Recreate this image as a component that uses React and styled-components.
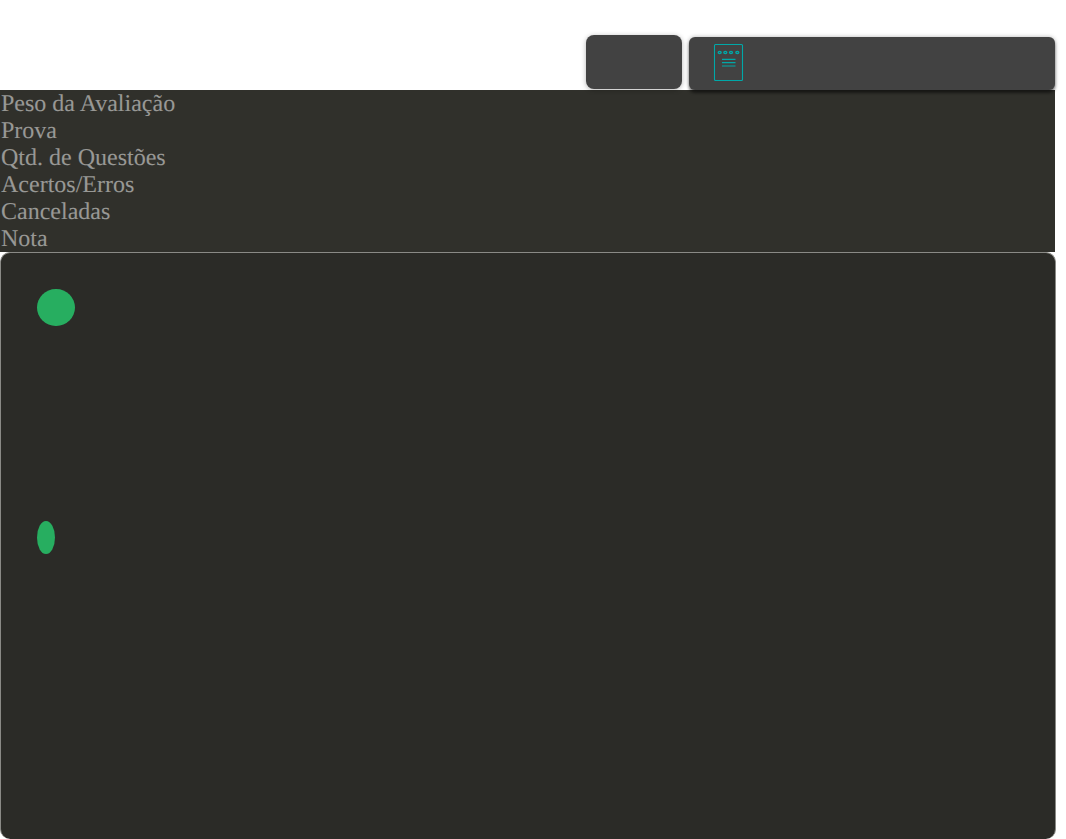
import React from "react";
import styled, { createGlobalStyle } from "styled-components";

const GlobalStyle = createGlobalStyle`
  html, body {
    margin: 0;
    padding: 0;
    background: #ffffff;
  }
  * {
    box-sizing: border-box;
  }
`;

const DocIcon = () => (
  <svg width="31" height="39" viewBox="0 0 31 39" fill="none" stroke="#00a8a8">
    <rect x="1.5" y="1.5" width="28" height="36" rx="1" strokeWidth="1.1" />
    <g strokeWidth="1.300">
      <ellipse cx="6.700" cy="9.500" rx="1.500" ry="1.100" />
      <ellipse cx="12.300" cy="9.500" rx="1.500" ry="1.100" />
      <ellipse cx="18" cy="9.500" rx="1.500" ry="1.100" />
      <ellipse cx="24.300" cy="9.500" rx="1.500" ry="1.100" />
    </g>
    <g strokeWidth="1.200">
      <path d="M9 16.300h13.500M9 19.700h13.500M9 23h13.500" />
    </g>
  </svg>
);

const headerLabels = [
  "Peso da Avaliação",
  "Prova",
  "Qtd. de Questões",
  "Acertos/Erros",
  "Canceladas",
  "Nota",
];

const App = () => {
  return (
    <>
      <GlobalStyle />
      <Page>
        <TopBar>
          <SmallCard />
          <WideCard>
            <DocIcon />
          </WideCard>
        </TopBar>
        <HeaderList>
          {headerLabels.map((label) => (
            <HeaderItem key={label}>{label}</HeaderItem>
          ))}
        </HeaderList>
        <Panel>
          <PanelRow>
            <Dot />
          </PanelRow>
          <PanelRow>
            <Oval />
          </PanelRow>
        </Panel>
      </Page>
    </>
  );
};

const Page = styled.div`
  width: 1056px;
  height: 839px;
  display: flex;
  flex-direction: column;
`;
const TopBar = styled.div`
  height: 90px;
  display: flex;
  justify-content: flex-end;
  align-items: flex-end;
  gap: 7px;
  padding-right: 1px;
  position: relative;
  z-index: 1;
`;
const SmallCard = styled.div`
  width: 96px;
  height: 54px;
  margin-bottom: 1px;
  background: #424242;
  border-radius: 8px;
  box-shadow: 0 1px 5px rgba(0, 0, 0, 0.3);
`;
const WideCard = styled.div`
  width: 366px;
  height: 53px;
  padding: 6px 0 0 24px;
  background: #424242;
  border-radius: 6px;
  box-shadow: 0 3px 3px rgba(0, 0, 0, 0.45), 0 0 4px rgba(0, 0, 0, 0.3);
`;
const HeaderList = styled.div`
  width: 1055px;
  height: 162px;
  padding-left: 1px;
  background: #30302b;
  font-family: "Liberation Serif", "Times New Roman", serif;
  font-size: 24px;
  color: #ffffff;
  text-rendering: geometricPrecision;
`;
const HeaderItem = styled.div`
  height: 27px;
  padding-top: 1px;
  line-height: 27px;
  opacity: 0.5;
`;
const Panel = styled.div`
  width: 1056px;
  height: 587px;
  padding: 35px 36px 0;
  background: #2b2b27;
  border: 1px solid #8a8a86;
  border-bottom: none;
  border-radius: 10px;
  display: flex;
  flex-direction: column;
`;
const PanelRow = styled.div`
  height: 233px;
`;
const Dot = styled.div`
  width: 37.500px;
  height: 37px;
  margin-top: 1px;
  border-radius: 50%;
  background: #27ae60;
`;
const Oval = styled.div`
  width: 18px;
  height: 33px;
  border-radius: 50%;
  background: #27ae60;
`;

export default App;
